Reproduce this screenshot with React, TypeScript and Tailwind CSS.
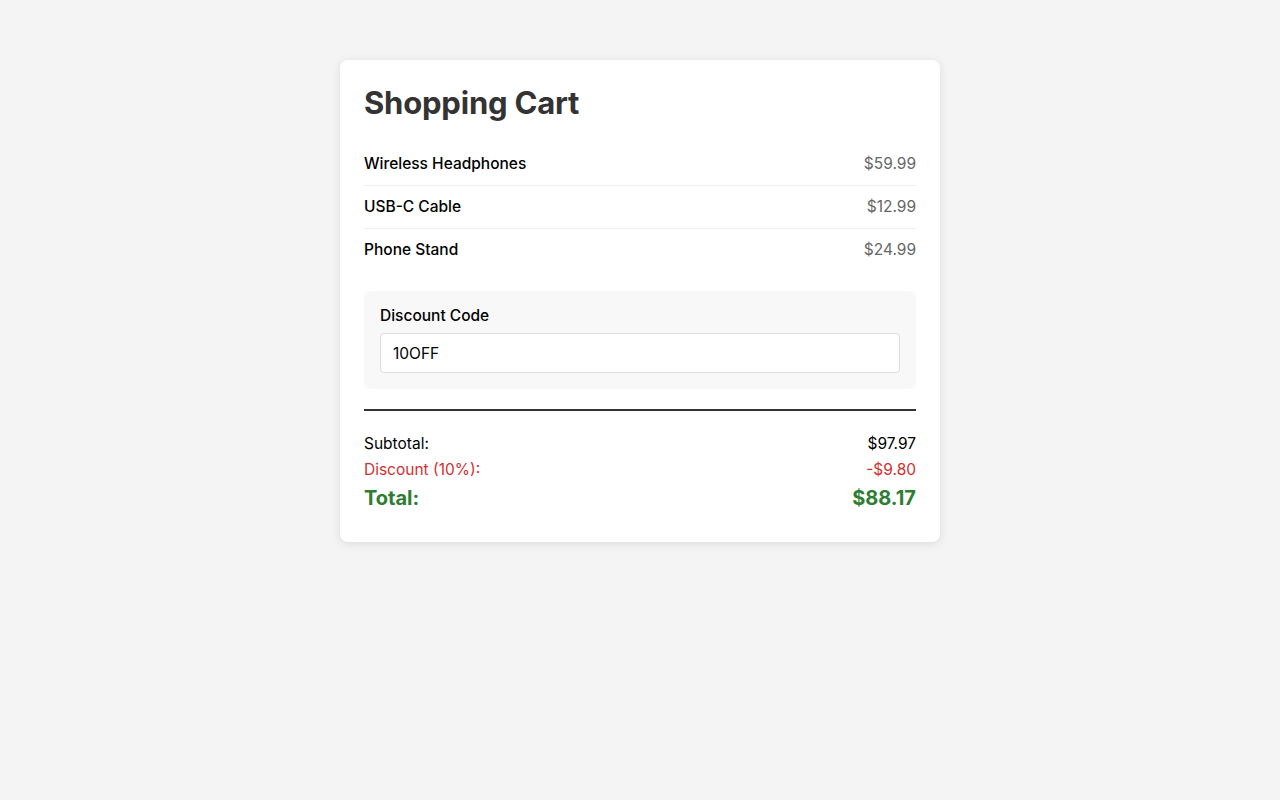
import React from 'react';

const items = [
  { name: 'Wireless Headphones', price: 59.99 },
  { name: 'USB-C Cable', price: 12.99 },
  { name: 'Phone Stand', price: 24.99 },
];

export default function App() {
  const subtotal = items.reduce((s, i) => s + i.price, 0);
  const discount = subtotal * 0.1;
  const total = subtotal - discount;

  return (
    <div className="min-h-screen bg-[#f4f4f4] pt-[60px] font-['Inter','Liberation_Sans',sans-serif]">
      <div className="mx-auto w-[600px] rounded-lg bg-white px-6 pt-6 pb-[29px] shadow-[0_2px_10px_rgba(0,0,0,0.1)]">
        <h1 className="mb-[21px] text-[31px] font-bold leading-[38px] tracking-[-0.2px] text-[#333]">Shopping Cart</h1>

        {/* Items */}
        <div>
          {items.map((item, i) => (
            <div
              key={item.name}
              className={`flex items-center justify-between text-[15.5px] ${
                i < items.length - 1 ? 'h-[43px] border-b border-[#eee]' : 'h-[42px]'
              }`}
            >
              <span className="font-medium text-black">{item.name}</span>
              <span className="text-[#666]">${item.price.toFixed(2)}</span>
            </div>
          ))}
        </div>

        {/* Discount */}
        <div className="mt-5 rounded-md bg-[#f8f8f8] p-4">
          <label className="mb-2 block text-[15.5px] font-medium leading-[18px] text-black">Discount Code</label>
          <input
            type="text"
            defaultValue="10OFF"
            className="h-10 w-full rounded border border-[#ddd] bg-white px-3 text-[15.5px] text-black outline-none"
          />
        </div>

        {/* Totals */}
        <div className="mt-5 border-t-2 border-[#333] pt-5">
          <div className="flex h-[26px] items-center justify-between text-[15.5px] text-black">
            <span>Subtotal:</span>
            <span>${subtotal.toFixed(2)}</span>
          </div>
          <div className="flex h-[26px] items-center justify-between text-[15.5px] text-[#d32f2f]">
            <span>Discount (10%):</span>
            <span>-${discount.toFixed(2)}</span>
          </div>
          <div className="flex h-[30px] items-center justify-between text-xl font-bold text-[#2e7d32]">
            <span>Total:</span>
            <span>${total.toFixed(2)}</span>
          </div>
        </div>
      </div>
    </div>
  );
}
